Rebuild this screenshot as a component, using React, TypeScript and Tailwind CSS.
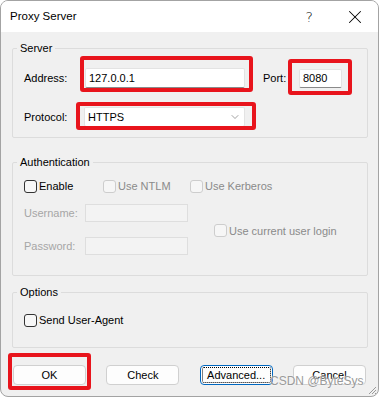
import { X, ChevronDown } from 'lucide-react';

const Check = ({ label, disabled = false }: { label: string; disabled?: boolean }) => (
  <div className="flex items-center h-[14px]">
    <span
      className={`w-[13px] h-[13px] rounded-[3px] border ${
        disabled ? 'border-[#cdcdcd] bg-[#f6f6f6]' : 'border-[#333333] bg-[#f7f7f7]'
      }`}
    ></span>
    <span className={`ml-[2px] leading-[14px] ${disabled ? 'text-[#8a8a8a]' : 'text-black'}`}>{label}</span>
  </div>
);

const Group = ({ title, className, children }: { title: string; className?: string; children: React.ReactNode }) => (
  <fieldset className={`w-[356px] border border-[#dcdcdc] rounded-[2px] ${className || ''}`}>
    <legend className="ml-[4px] px-[3px] leading-[14px] text-black">{title}</legend>
    {children}
  </fieldset>
);

const Button = ({ label, focused = false }: { label: string; focused?: boolean }) => (
  <button
    className={`relative w-[73px] h-[20px] rounded-[4px] border bg-[#fdfdfd] text-black leading-[18px] ${
      focused ? 'border-[#0067c0]' : 'border-[#d0d0d0]'
    }`}
  >
    {focused && <span className="absolute inset-[1px] border border-dotted border-black rounded-[2px]"></span>}
    {label}
  </button>
);

const App = () => {
  return (
    <div className="w-[379px] h-[398px] bg-white font-['Liberation_Sans',Arial,sans-serif] text-[11px]">
      <div className="relative w-[379px] h-[397px] rounded-[8px] border border-[#a3a3a3] bg-[#f0f0f0] overflow-hidden">
        {/* title bar */}
        <div className="h-[31px] bg-white flex items-center pl-[9px]">
          <span className="text-[11.5px] text-black">Proxy Server</span>
          <span className="ml-auto text-[14px] leading-none text-black font-['DejaVu_Sans',sans-serif] font-light mr-[31px]">?</span>
          <X size={22} strokeWidth={1.1} className="text-black mr-[12px]" />
        </div>

        <div className="flex flex-col pl-[11px]">
          <Group title="Server" className="mt-[9px] pb-[10px]">
            <div className="flex items-center h-[20px] mt-[13px] pl-[11px]">
              <span className="w-[61px]">Address:</span>
              <div className="w-[160px] h-[20px] bg-white border border-[#e3e3e3] border-b-[#8a8a8a] rounded-[2px] flex items-center px-[3px]">
                127.0.0.1
              </div>
              <span className="ml-[18px] w-[36px]">Port:</span>
              <div className="w-[43px] h-[19px] bg-white border border-[#e3e3e3] border-b-[#8a8a8a] rounded-[2px] flex items-center px-[3px]">
                8080
              </div>
            </div>
            <div className="flex items-center h-[20px] mt-[19px] pl-[11px]">
              <span className="w-[60px]">Protocol:</span>
              <div className="w-[161px] h-[20px] bg-white border border-[#e3e3e3] border-b-[#8a8a8a] rounded-[2px] flex items-center pl-[3px] pr-[3px]">
                <span>HTTPS</span>
                <ChevronDown size={12} strokeWidth={1} className="ml-auto text-[#444]" />
              </div>
            </div>
          </Group>

          <Group title="Authentication" className="mt-[17px] pb-[20px]">
            <div className="flex items-center mt-[10px] pl-[11px]">
              <div className="w-[79px]"><Check label="Enable" /></div>
              <div className="w-[87px]"><Check label="Use NTLM" disabled /></div>
              <Check label="Use Kerberos" disabled />
            </div>
            <div className="flex items-center mt-[11px] pl-[11px]">
              <div className="flex flex-col gap-[15px]">
                <div className="flex items-center">
                  <span className="w-[61px] text-[#a6a6a6]">Username:</span>
                  <div className="w-[103px] h-[18px] bg-[#f3f3f3] border border-[#dedede]"></div>
                </div>
                <div className="flex items-center">
                  <span className="w-[61px] text-[#a6a6a6]">Password:</span>
                  <div className="w-[103px] h-[18px] bg-[#f3f3f3] border border-[#dedede]"></div>
                </div>
              </div>
              <div className="ml-[26px] mt-[2px]">
                <Check label="Use current user login" disabled />
              </div>
            </div>
          </Group>

          <Group title="Options" className="mt-[9px] pb-[20px]">
            <div className="mt-[14px] pl-[11px]">
              <Check label="Send User-Agent" />
            </div>
          </Group>

          <div className="flex justify-between w-[353px] ml-[1px] mt-[17px]">
            <Button label="OK" />
            <Button label="Check" />
            <Button label="Advanced..." focused />
            <Button label="Cancel" />
          </div>
        </div>

        {/* annotation boxes */}
        <div className="absolute left-[79px] top-[55px] w-[173px] h-[36px] border-[4px] border-[#e8141c] rounded-[3px]"></div>
        <div className="absolute left-[287px] top-[58px] w-[64px] h-[36px] border-[4px] border-[#e8141c] rounded-[3px]"></div>
        <div className="absolute left-[75px] top-[101px] w-[180px] h-[28px] border-[4px] border-[#e8141c] rounded-[3px]"></div>
        <div className="absolute left-[7px] top-[352px] w-[83px] h-[37px] border-[4px] border-[#e8141c] rounded-[3px]"></div>

        {/* watermark */}
        <span className="absolute left-[269px] top-[371px] text-[12px] text-[#9a9a9a] [text-shadow:0_0_2px_#ffffff]">CSDN @ByteSys</span>

        {/* resize grip */}
        <svg className="absolute right-[1px] bottom-[1px]" width="10" height="10" viewBox="0 0 10 10">
          <line x1="9" y1="2" x2="2" y2="9" stroke="#9a9a9a" strokeWidth="1" />
          <line x1="9" y1="5" x2="5" y2="9" stroke="#9a9a9a" strokeWidth="1" />
          <line x1="9" y1="8" x2="8" y2="9" stroke="#9a9a9a" strokeWidth="1" />
        </svg>
      </div>
    </div>
  );
};

export default App;
